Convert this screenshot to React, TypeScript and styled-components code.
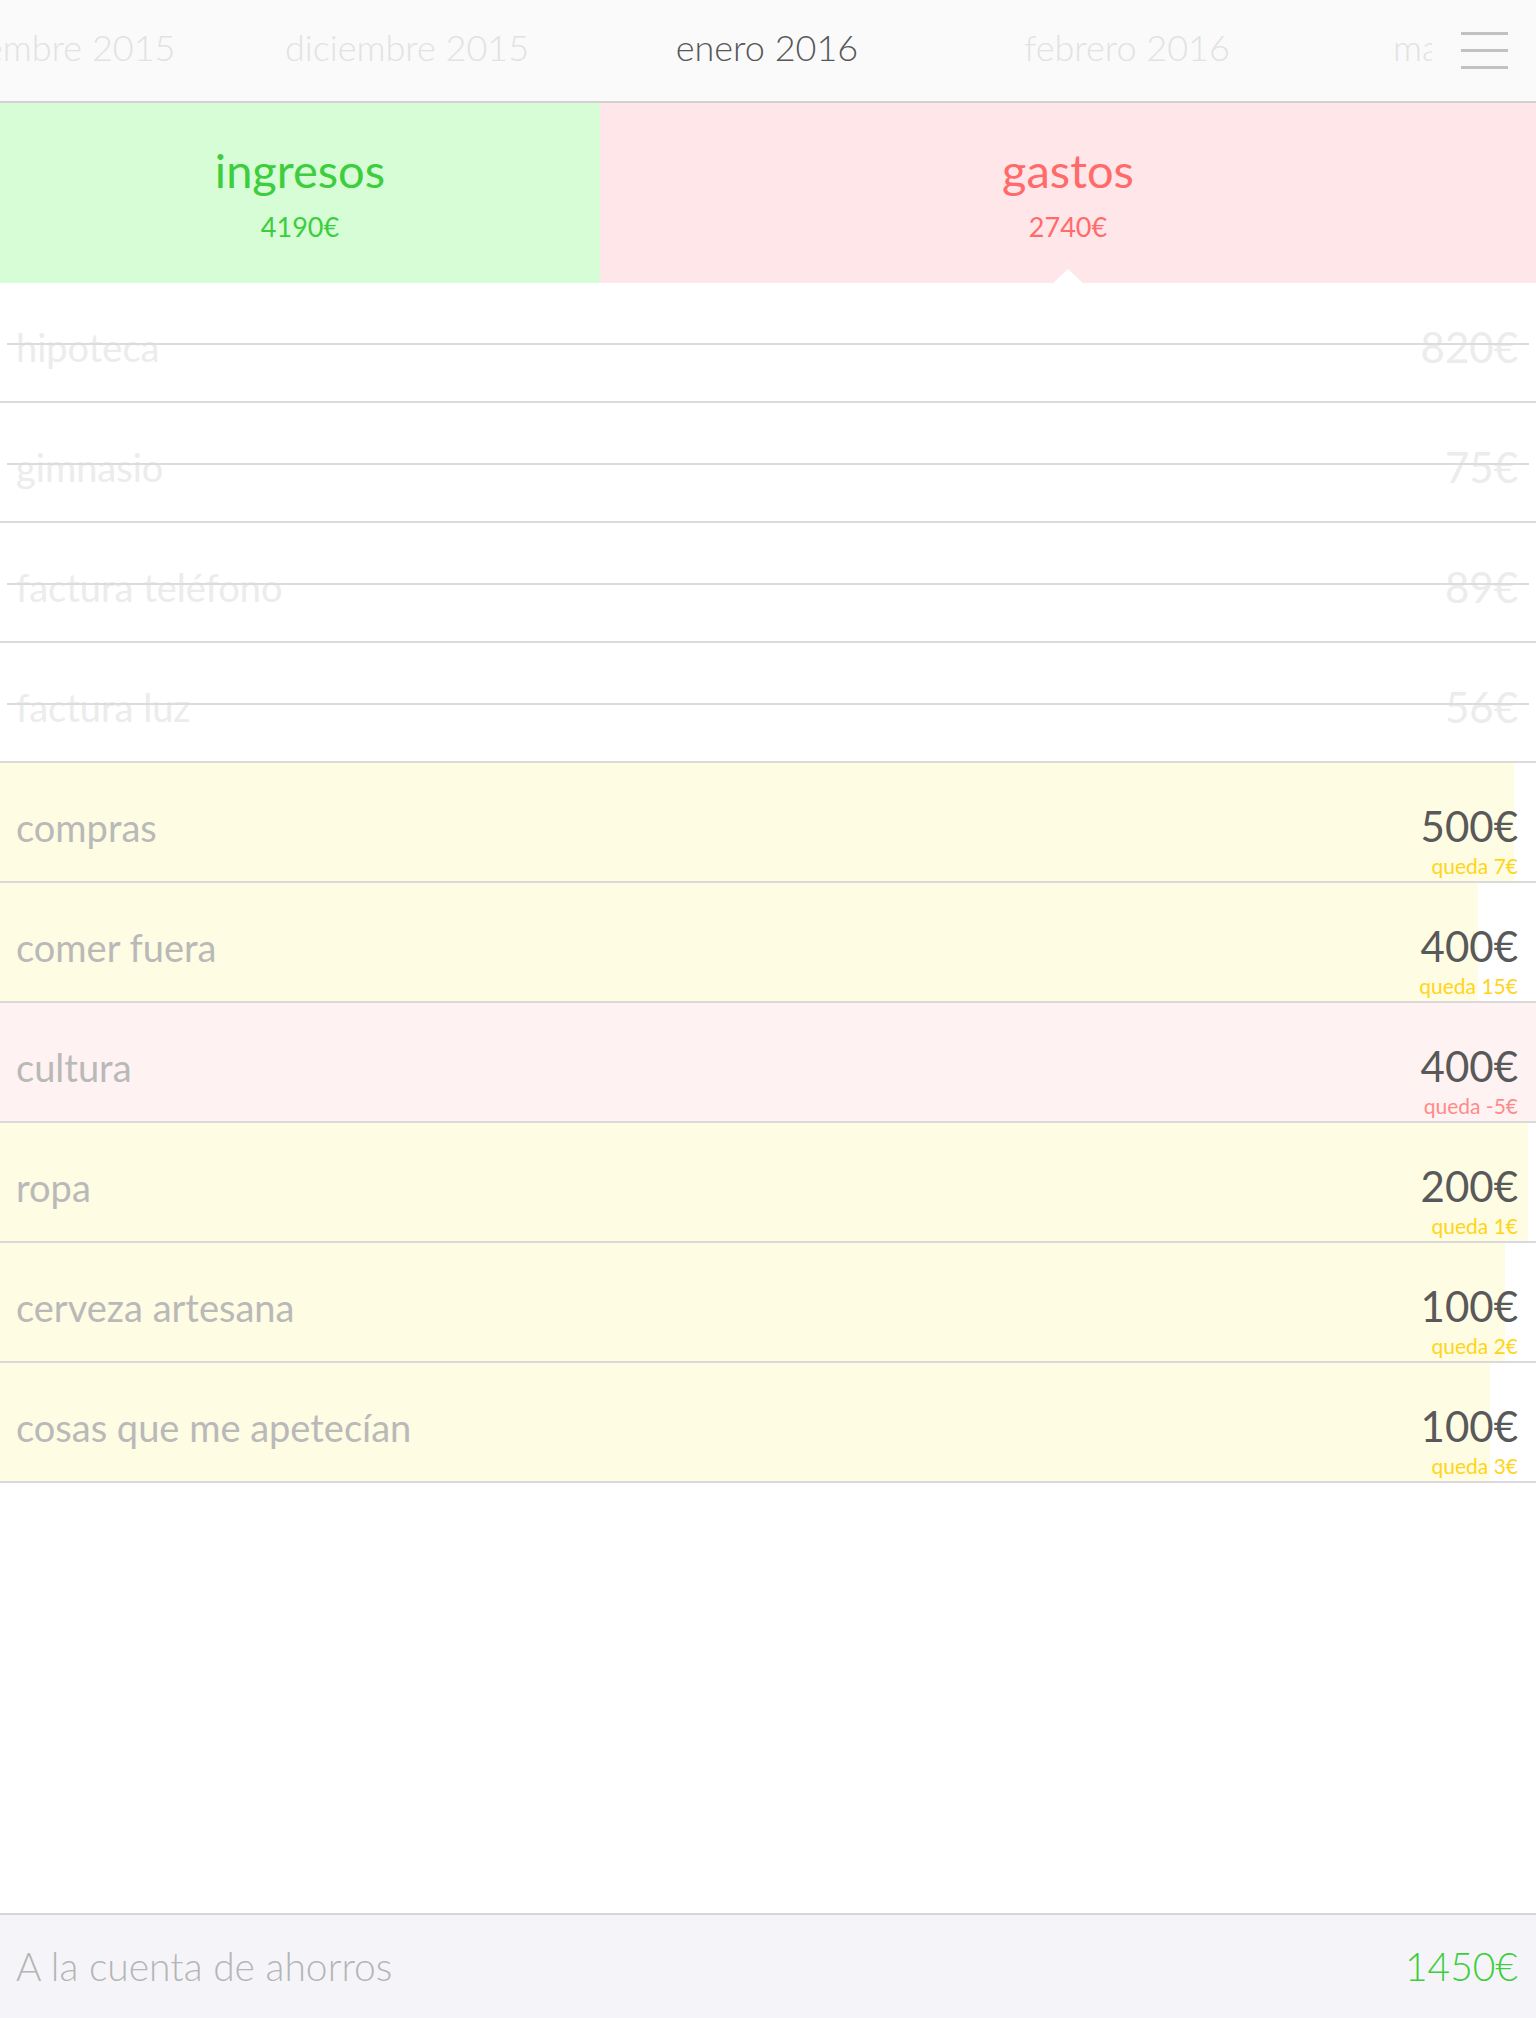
import React from 'react';
import styled, { createGlobalStyle } from 'styled-components';

type Fixed = { name: string; amount: number };
type Budget = { name: string; amount: number; left: number };

const months = ['noviembre 2015', 'diciembre 2015', 'enero 2016', 'febrero 2016', 'marzo 2016'];
const activeMonth = 2;

const fixedCosts: Fixed[] = [
  { name: 'hipoteca', amount: 820 },
  { name: 'gimnasio', amount: 75 },
  { name: 'factura teléfono', amount: 89 },
  { name: 'factura luz', amount: 56 },
];

const budgets: Budget[] = [
  { name: 'compras', amount: 500, left: 7 },
  { name: 'comer fuera', amount: 400, left: 15 },
  { name: 'cultura', amount: 400, left: -5 },
  { name: 'ropa', amount: 200, left: 1 },
  { name: 'cerveza artesana', amount: 100, left: 2 },
  { name: 'cosas que me apetecían', amount: 100, left: 3 },
];

const GlobalStyle = createGlobalStyle`
  html, body {
    margin: 0;
    padding: 0;
    background: #fff;
  }
  body {
    font-family: Lato, 'Noto Sans', sans-serif;
  }
  * {
    box-sizing: border-box;
  }
`;

const Page = styled.div`
  display: flex;
  flex-direction: column;
  min-height: 100vh;
  width: 100%;
  overflow: hidden;
`;

const Header = styled.header`
  display: flex;
  height: 103px;
  background: #fafafa;
  border-bottom: 2px solid #d2d2d2;
`;

const MonthTrack = styled.div`
  flex: 1;
  display: flex;
  align-items: center;
  padding-bottom: 8px;
  overflow: hidden;
`;

const MonthStrip = styled.div`
  display: flex;
  flex-shrink: 0;
  margin-left: -133px;
`;

const Month = styled.div<{ $active?: boolean }>`
  width: 360px;
  flex-shrink: 0;
  text-align: center;
  white-space: nowrap;
  font-size: 36px;
  font-weight: 300;
  line-height: 1;
  color: ${(p) => (p.$active ? '#575757' : '#e2e2e2')};
`;

const MenuButton = styled.button`
  width: 104px;
  flex-shrink: 0;
  display: flex;
  flex-direction: column;
  align-items: center;
  justify-content: center;
  gap: 14px;
  padding: 0;
  border: none;
  background: #fafafa;
  cursor: pointer;
`;

const MenuLine = styled.span`
  display: block;
  width: 47px;
  height: 3px;
  background: #c2c2c2;
`;

const Summary = styled.section`
  display: flex;
  height: 180px;
`;

const Panel = styled.div<{ $tone: 'in' | 'out'; $selected?: boolean }>`
  position: relative;
  display: flex;
  flex-direction: column;
  align-items: center;
  justify-content: center;
  ${(p) => (p.$tone === 'in' ? 'width: 600px;' : 'flex: 1;')}
  background: ${(p) => (p.$tone === 'in' ? '#d6fdd6' : '#ffe6e8')};
  color: ${(p) => (p.$tone === 'in' ? '#3dcd3d' : '#ff6b6b')};

  &::after {
    content: '';
    display: ${(p) => (p.$selected ? 'block' : 'none')};
    position: absolute;
    left: 50%;
    bottom: 0;
    margin-left: -15px;
    border-left: 15px solid transparent;
    border-right: 15px solid transparent;
    border-bottom: 14px solid #fff;
  }
`;

const PanelTitle = styled.div`
  font-size: 47px;
  line-height: 1;
  margin-bottom: 19px;
`;

const PanelAmount = styled.div`
  font-size: 27px;
  line-height: 1;
`;

const List = styled.section`
  display: flex;
  flex-direction: column;
`;

const Row = styled.div<{ $struck?: boolean }>`
  position: relative;
  display: flex;
  align-items: center;
  justify-content: space-between;
  height: 120px;
  padding: 10px 18px 0 16px;
  border-bottom: 2px solid #dadada;

  &::after {
    content: '';
    display: ${(p) => (p.$struck ? 'block' : 'none')};
    position: absolute;
    left: 7px;
    right: 7px;
    top: 60px;
    height: 2px;
    background: #dcdcdc;
  }
`;

const Fill = styled.div<{ $over?: boolean }>`
  position: absolute;
  left: 0;
  top: 0;
  bottom: 0;
  background: ${(p) => (p.$over ? '#fff2f2' : '#fefce2')};
`;

const Label = styled.span<{ $struck?: boolean }>`
  position: relative;
  font-size: 38px;
  line-height: 1;
  color: ${(p) => (p.$struck ? '#ececec' : '#b9b9b9')};
`;

const Amount = styled.span<{ $struck?: boolean }>`
  font-size: 42px;
  line-height: 1;
  color: ${(p) => (p.$struck ? '#ececec' : '#595959')};
`;

const AmountBlock = styled.div`
  position: relative;
  align-self: flex-start;
  margin-top: 32px;
  display: flex;
  flex-direction: column;
  align-items: flex-end;
  gap: 8px;
`;

const Remaining = styled.span<{ $over?: boolean }>`
  font-size: 21px;
  line-height: 1;
  color: ${(p) => (p.$over ? '#ff8a8a' : '#ffd51c')};
`;

const Footer = styled.footer`
  margin-top: auto;
  display: flex;
  align-items: center;
  justify-content: space-between;
  height: 105px;
  padding: 0 18px 0 16px;
  background: #f5f5f9;
  border-top: 2px solid #d6d6d8;
`;

const FooterLabel = styled.span`
  font-size: 39px;
  font-weight: 300;
  line-height: 1;
  color: #b5b5b5;
`;

const FooterAmount = styled.span`
  font-size: 39px;
  font-weight: 300;
  line-height: 1;
  color: #3dcd3d;
`;

const spentShare = (b: Budget) => Math.min(100, ((b.amount - b.left) / b.amount) * 100);

const App: React.FC = () => (
  <Page>
    <GlobalStyle />
    <Header>
      <MonthTrack>
        <MonthStrip>
          {months.map((m, idx) => (
            <Month key={m} $active={idx === activeMonth}>
              {m}
            </Month>
          ))}
        </MonthStrip>
      </MonthTrack>
      <MenuButton type='button' aria-label='menú'>
        <MenuLine />
        <MenuLine />
        <MenuLine />
      </MenuButton>
    </Header>

    <Summary>
      <Panel $tone='in'>
        <PanelTitle>ingresos</PanelTitle>
        <PanelAmount>4190€</PanelAmount>
      </Panel>
      <Panel $tone='out' $selected>
        <PanelTitle>gastos</PanelTitle>
        <PanelAmount>2740€</PanelAmount>
      </Panel>
    </Summary>

    <List>
      {fixedCosts.map((f) => (
        <Row key={f.name} $struck>
          <Label $struck>{f.name}</Label>
          <Amount $struck>{f.amount}€</Amount>
        </Row>
      ))}
      {budgets.map((b) => {
        const over = b.left < 0;
        return (
          <Row key={b.name}>
            <Fill $over={over} style={{ width: `${spentShare(b)}%` }} />
            <Label>{b.name}</Label>
            <AmountBlock>
              <Amount>{b.amount}€</Amount>
              <Remaining $over={over}>queda {b.left}€</Remaining>
            </AmountBlock>
          </Row>
        );
      })}
    </List>

    <Footer>
      <FooterLabel>A la cuenta de ahorros</FooterLabel>
      <FooterAmount>1450€</FooterAmount>
    </Footer>
  </Page>
);

export default App;
